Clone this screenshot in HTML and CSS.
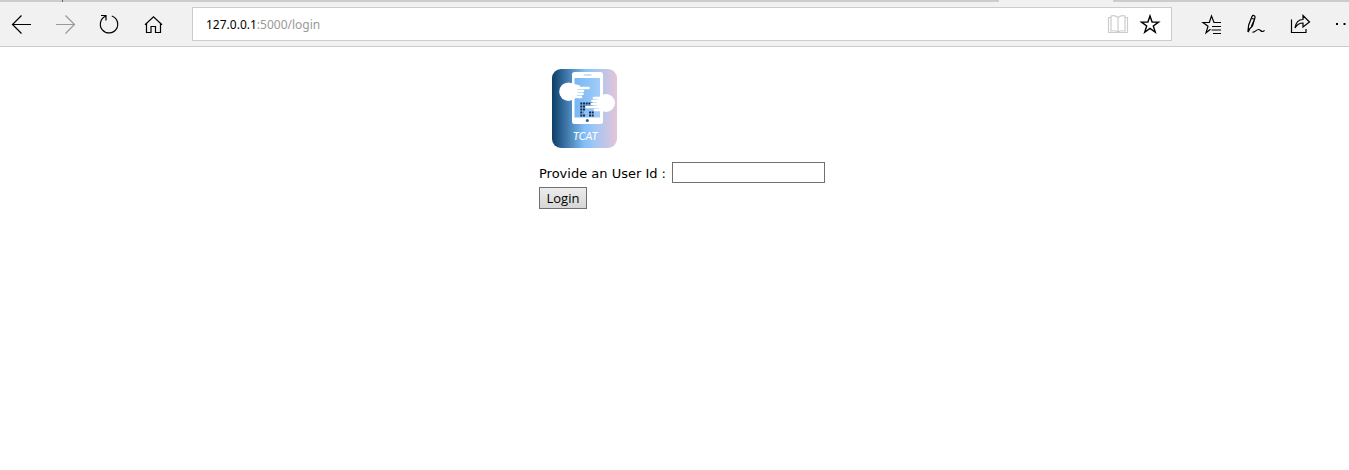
FILE: index.html
```html
<!DOCTYPE html>
<html lang="en">
<head>
<meta charset="utf-8">
<title>Login</title>
<link rel="stylesheet" href="styles.css">
</head>
<body>
<header class="browser">
  <div class="tabs"><span class="tab-rest"></span><span class="tab-divider"></span><span class="tab-strip"></span><span class="tab-active"></span><span class="tab-end"></span></div>
  <div class="toolbar">
    <nav class="nav">
      <button class="tool" aria-label="Back"><svg width="24" height="24" viewBox="0 0 24 24"><path d="M22 12.5H3.5M12.5 3.5l-9 9 9 9"/></svg></button>
      <button class="tool dim" aria-label="Forward" disabled><svg width="24" height="24" viewBox="0 0 24 24"><path d="M3 12.5h18.5M12.500 3.500l9 9-9 9"/></svg></button>
      <button class="tool" aria-label="Refresh"><svg width="24" height="24" viewBox="0 0 24 24"><path d="M8.500 4.300A8.700 8.700 0 1 0 14.800 4M4 3.500h5v5"/></svg></button>
      <button class="tool" aria-label="Home"><svg width="24" height="24" viewBox="0 0 24 24"><path d="M4 12.800l8.500-8 8.500 8M5.500 11.500v9h4.500v-6h4.500v6h5v-9"/></svg></button>
    </nav>
    <div class="address">
      <a class="url" href="#">127.0.0.1<span class="path">:5000/login</span></a>
      <button class="tool book" aria-label="Reading view"><svg width="24" height="24" viewBox="0 0 24 24"><path d="M12 5.500C10 3.800 7 3.500 5 4v15c2.500-.5 5-.3 7 1 2-1.300 4.500-1.500 7-1V4c-2-.5-5-.2-7 1.500zV20M5 5.500H2.500v15h19v-15H19"/></svg></button>
      <button class="tool" aria-label="Add to favorites"><svg width="24" height="24" viewBox="0 0 24 24"><path class="bold" d="M12 4l2.100 6.100h6.400l-5.200 3.800 2 6.300L12 16.400l-5.300 3.800 2-6.300-5.200-3.800h6.400z"/></svg></button>
    </div>
    <div class="actions">
      <button class="tool" aria-label="Favorites"><svg width="24" height="24" viewBox="0 0 24 24"><path d="M21 10.500h-7L11.500 4 9.300 10.500H3l5 3.800-2 6.500 4.500-3.500M12 14.500h9M11.500 18h9.500M13 21.500h8"/></svg></button>
      <button class="tool" aria-label="Web note"><svg width="24" height="24" viewBox="0 0 24 24"><path d="M4 18.500l.7-5.500L8 4.500c.8-1.800 3.500-1 3 1L8.500 14 4 18.500zM8 6.500l2.500.8-3 7M5 19.500c-1 1-.5-1.500 1-2M8.500 20c2.500 1 3.500-2.500 6-2.500 2 0 2 2 4 2 1 0 1.500-.5 2-1.200"/></svg></button>
      <button class="tool" aria-label="Share"><svg width="24" height="24" viewBox="0 0 24 24"><path d="M3.500 7.500v13h14.500V17M7 16c.8-5.500 4-8.500 8-8.500V3.500l6.500 6.500-6.500 5v-4c-3.500 0-6 1.500-8 5z"/></svg></button>
      <button class="tool" aria-label="More"><svg width="24" height="24" viewBox="0 0 24 24"><path class="dots" d="M4 11h2v2H4zM11.500 11h2v2h-2zM19 11h2v2h-2z"/></svg></button>
    </div>
  </div>
</header>
<main class="page">
  <form class="login">
    <svg class="logo" width="65" height="79" viewBox="0 0 65 79" role="img" aria-label="TCAT">
      <defs><linearGradient id="sky"><stop offset="0" stop-color="#0d3d63"/><stop offset=".12" stop-color="#265d8c"/><stop offset=".5" stop-color="#82bff9"/><stop offset=".65" stop-color="#9fc6f5"/><stop offset="1" stop-color="#e4c5d7"/></linearGradient>
      <linearGradient id="glass"><stop offset="0" stop-color="#75b7f5"/><stop offset="1" stop-color="#a3ccf8"/></linearGradient></defs>
      <rect width="65" height="79" rx="9" fill="url(#sky)"/>
      <rect x="20" y="3" width="31" height="52" rx="2.500" fill="#fff"/>
      <rect x="22.500" y="9" width="25.500" height="39.500" fill="url(#glass)"/>
      <path d="M32 6h7" stroke="#9cc3ec" stroke-linecap="round"/>
      <circle cx="35.300" cy="51.500" r="1.500" fill="#2e608f"/>
      <g fill="none" stroke="#152b48" stroke-width="2.200" stroke-dasharray="2 .7"><path d="M28.300 34.500h13.300M28.300 37.500h13.300M28.300 40.500h5M28.300 43.500h3M28.300 46.500h5M37 43.500h5M37 46.500h5"/></g>
      <g fill="#fff"><circle cx="16.500" cy="22.700" r="9.300"/><circle cx="54" cy="34" r="9"/></g>
      <g fill="none" stroke="#fff" stroke-width="2.600" stroke-linecap="round"><path d="M19 15.500l8 2M20 19h16.500M20 22h11M20 25h10.500M20 28h9M52 38H34.500M52 35H40M52 32H40.500M52 29H42M50 41h-7"/></g>
      <text class="mark" x="21" y="71">TCAT</text>
    </svg>
    <div class="field"><label for="user">Provide an User Id :</label><input id="user" name="user" type="text"></div>
    <button class="submit" type="submit">Login</button>
  </form>
</main>
</body>
</html>
```
FILE: styles.css
```css
* { box-sizing: border-box; }
body { margin: 0; background: #fff; color: #000; font-family: Verdana, "DejaVu Sans", sans-serif; font-size: 13px; }
.browser { background: #f1f1f1; border-bottom: 1px solid #ccc; }
.tabs { display: flex; height: 2px; }
.tab-rest { width: 62px; background: #ccc; }
.tab-divider { width: 1px; background: #666; }
.tab-strip { flex: 1; background: #ccc; }
.tab-active { width: 114px; }
.tab-end { width: 236px; background: #ccc; }
.toolbar { display: flex; align-items: center; height: 44px; overflow: hidden; }
.nav { display: flex; gap: 20px; padding-left: 9px; width: 192px; flex: none; }
.tool { display: flex; padding: 0; border: 0; background: none; color: #000; flex: none; }
.tool svg { fill: none; stroke: currentColor; stroke-width: 1.2; }
.tool .bold { stroke-width: 1.4; }
.tool .dots { fill: currentColor; stroke: none; }
.dim { color: #999; }
.address { display: flex; flex: 1; align-items: center; gap: 8px; height: 34px; padding: 0 9px 0 13px; background: #fff; border: 1px solid #ccc; }
.url { flex: 1; color: #000; font-family: "Segoe UI", "Noto Sans", sans-serif; font-size: 12px; text-decoration: none; }
.path { color: #999; }
.book { color: #ccc; }
.actions { display: flex; gap: 20px; width: 177px; padding-left: 28px; flex: none; }
.page { display: flex; justify-content: center; padding: 22px 0 0 15px; }
.login { display: flex; flex-direction: column; align-items: flex-start; }
.logo { margin: 0 0 14px 13px; }
.mark { fill: #fff; font-family: "Brush Script MT", Lato, cursive; font-size: 11px; font-style: italic; }
.field { display: flex; align-items: center; gap: 6px; margin-bottom: 4px; }
.field label { padding-top: 2px; }
.field input { width: 153px; height: 21px; padding: 1px 2px; border: 1px solid #707070; background: #fff; font: inherit; }
.submit { width: 48px; height: 22px; padding: 0; border: 1px solid #707070; background: linear-gradient(#ececec, #d6d6d6); color: #000; font-family: "Segoe UI", "Open Sans", sans-serif; font-size: 13px; line-height: 20px; }
```
